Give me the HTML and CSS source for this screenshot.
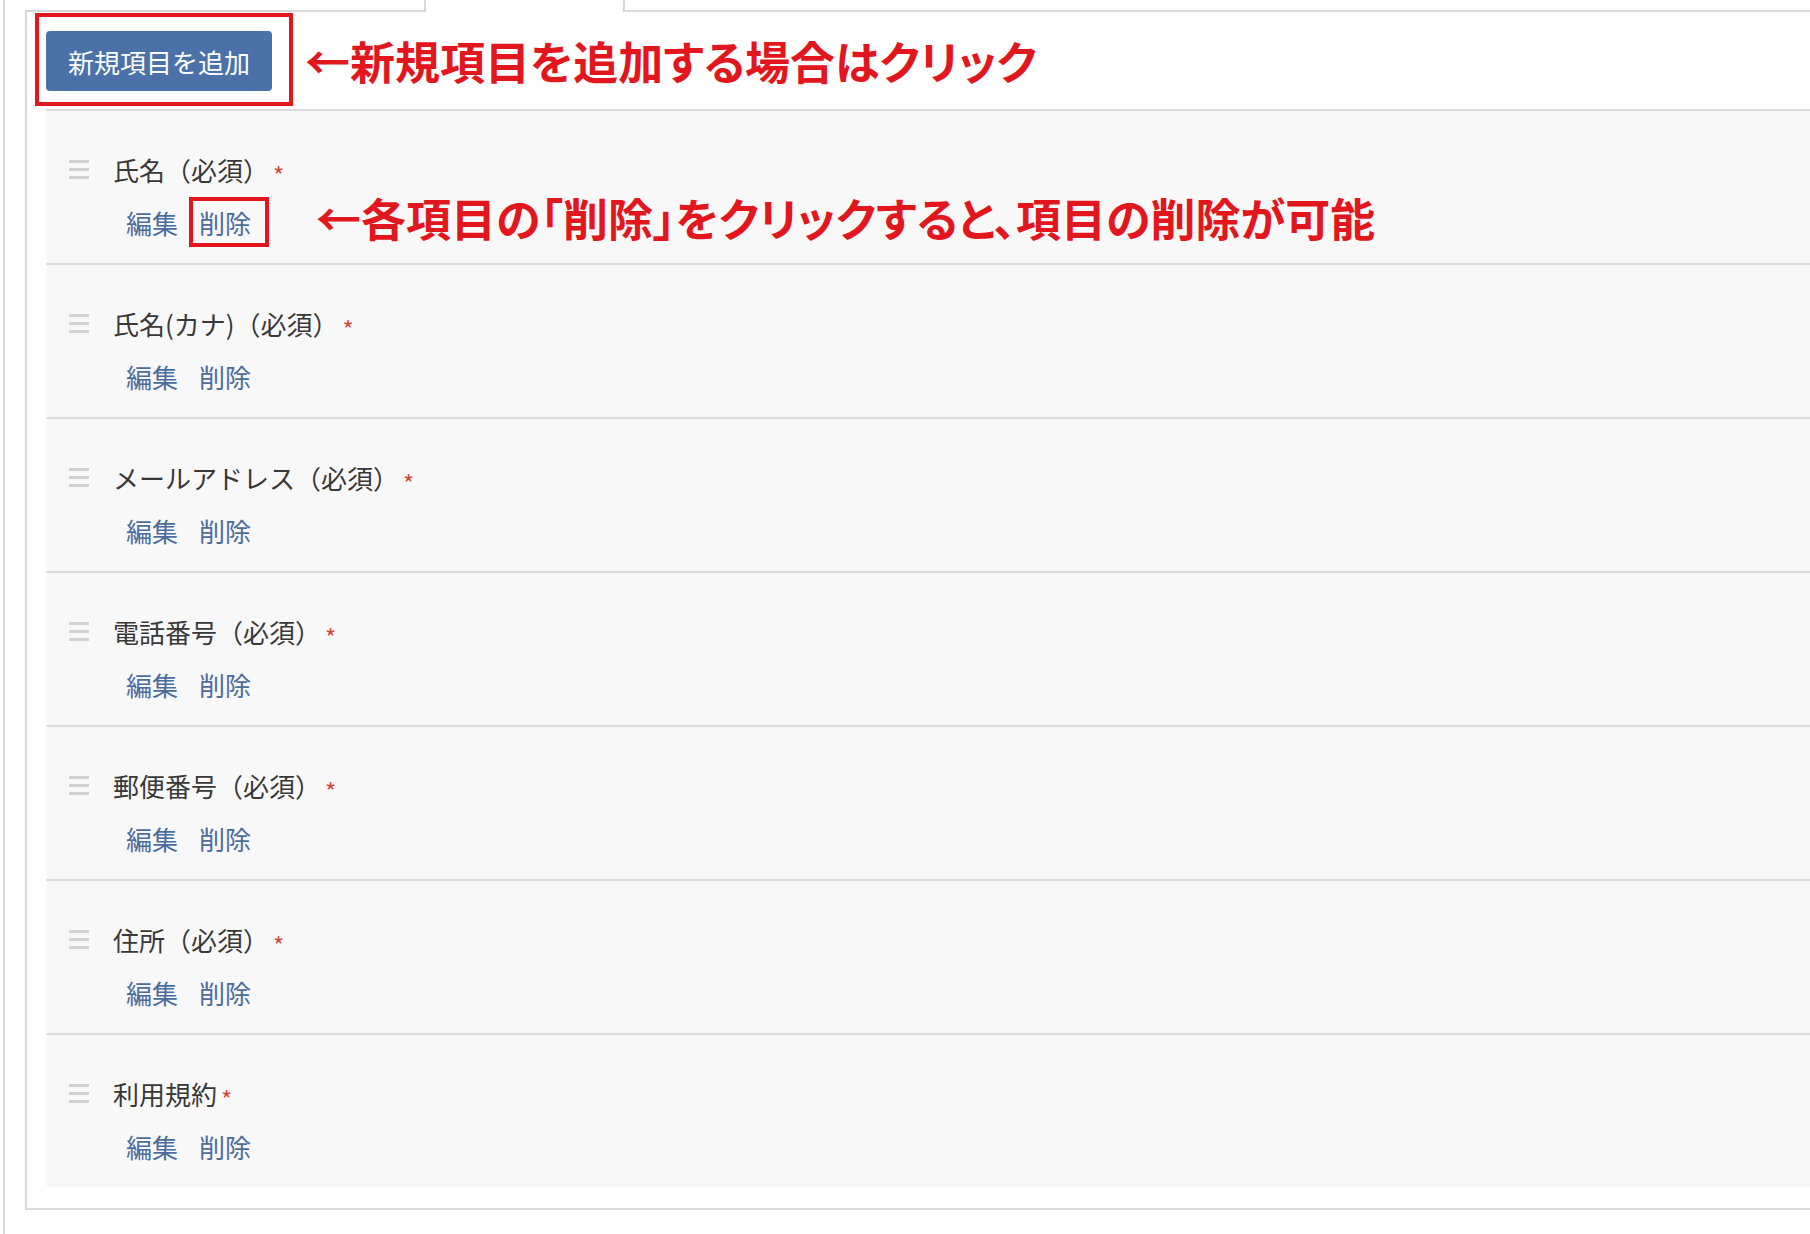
FILE: index.html
```html
<!DOCTYPE html>
<html lang="ja">
<head>
  <meta charset="UTF-8" />
  <meta name="viewport" content="width=device-width, initial-scale=1.0" />
  <title>フォーム項目</title>
  <link rel="stylesheet" href="styles.css">
</head>
<body>
  <div class="frame">
    <div class="tabs">
      <div class="tab"></div>
    </div>
    <div class="panel">
      <div class="panel-head">
        <div class="mark-box">
          <button class="add-button">新規項目を追加</button>
        </div>
        <span class="note">←新規項目を追加する場合はクリック</span>
      </div>

      <ul class="field-list">
        <li class="field">
          <span class="handle"><svg width="20" height="20" viewBox="0 0 20 20"><rect x="0" y="0" width="20" height="3"/><rect x="0" y="8" width="20" height="3"/><rect x="0" y="16" width="20" height="3"/></svg></span>
          <div class="field-label">氏名（必須）<span class="req">*</span></div>
          <div class="field-actions">
            <a class="edit">編集</a>
            <a class="delete marked">削除</a>
            <span class="note note-sub">←各項目の「削除」をクリックすると、項目の削除が可能</span>
          </div>
        </li>
        <li class="field">
          <span class="handle"><svg width="20" height="20" viewBox="0 0 20 20"><rect x="0" y="0" width="20" height="3"/><rect x="0" y="8" width="20" height="3"/><rect x="0" y="16" width="20" height="3"/></svg></span>
          <div class="field-label">氏名(カナ)（必須）<span class="req">*</span></div>
          <div class="field-actions">
            <a class="edit">編集</a>
            <a class="delete">削除</a>
          </div>
        </li>
        <li class="field">
          <span class="handle"><svg width="20" height="20" viewBox="0 0 20 20"><rect x="0" y="0" width="20" height="3"/><rect x="0" y="8" width="20" height="3"/><rect x="0" y="16" width="20" height="3"/></svg></span>
          <div class="field-label">メールアドレス（必須）<span class="req">*</span></div>
          <div class="field-actions">
            <a class="edit">編集</a>
            <a class="delete">削除</a>
          </div>
        </li>
        <li class="field">
          <span class="handle"><svg width="20" height="20" viewBox="0 0 20 20"><rect x="0" y="0" width="20" height="3"/><rect x="0" y="8" width="20" height="3"/><rect x="0" y="16" width="20" height="3"/></svg></span>
          <div class="field-label">電話番号（必須）<span class="req">*</span></div>
          <div class="field-actions">
            <a class="edit">編集</a>
            <a class="delete">削除</a>
          </div>
        </li>
        <li class="field">
          <span class="handle"><svg width="20" height="20" viewBox="0 0 20 20"><rect x="0" y="0" width="20" height="3"/><rect x="0" y="8" width="20" height="3"/><rect x="0" y="16" width="20" height="3"/></svg></span>
          <div class="field-label">郵便番号（必須）<span class="req">*</span></div>
          <div class="field-actions">
            <a class="edit">編集</a>
            <a class="delete">削除</a>
          </div>
        </li>
        <li class="field">
          <span class="handle"><svg width="20" height="20" viewBox="0 0 20 20"><rect x="0" y="0" width="20" height="3"/><rect x="0" y="8" width="20" height="3"/><rect x="0" y="16" width="20" height="3"/></svg></span>
          <div class="field-label">住所（必須）<span class="req">*</span></div>
          <div class="field-actions">
            <a class="edit">編集</a>
            <a class="delete">削除</a>
          </div>
        </li>
        <li class="field">
          <span class="handle"><svg width="20" height="20" viewBox="0 0 20 20"><rect x="0" y="0" width="20" height="3"/><rect x="0" y="8" width="20" height="3"/><rect x="0" y="16" width="20" height="3"/></svg></span>
          <div class="field-label">利用規約<span class="req">*</span></div>
          <div class="field-actions">
            <a class="edit">編集</a>
            <a class="delete">削除</a>
          </div>
        </li>
      </ul>
    </div>
  </div>
</body>
</html>
```

FILE: styles.css
```css
body {
  margin: 0;
  background: #fff;
  font-family: "Noto Sans CJK JP", "Noto Sans", sans-serif;
  color: #333;
  overflow: hidden;
}
.frame {
  margin-left: 3px;
  border-left: 2px solid #d8d8d8;
  padding-left: 20px;
  height: 100vh;
}
/* 上部タブ（選択中） */
.tabs {
  display: flex;
  height: 12px;
  margin-bottom: -2px;
  padding-left: 399px;
}
.tab {
  width: 197px;
  border-left: 2px solid #d8d8d8;
  border-right: 2px solid #d8d8d8;
  background: #fff;
  position: relative;
  z-index: 1;
}
.panel {
  border: 2px solid #d9d9d9;
  margin-right: -40px;
  padding-bottom: 21px;
}
.panel-head {
  display: flex;
  align-items: center;
  padding: 1px 0 3px 8px;
}
/* 赤枠の注釈 */
.mark-box {
  border: 4px solid #e2171e;
  padding: 14px 17px 11px 7px;
}
.add-button {
  width: 226px;
  height: 60px;
  border: none;
  border-radius: 4px;
  background-color: #4a72a9;
  color: #fff;
  font-family: inherit;
  font-size: 26px;
  cursor: pointer;
}
.note {
  color: #e2171e;
  font-weight: bold;
  font-size: 45px;
  line-height: 50px;
  white-space: nowrap;
  font-feature-settings: "palt";
  margin-left: 12px;
  margin-top: 2px;
}
.field-list {
  list-style: none;
  margin: 0 0 0 19px;
  padding: 0;
  background: #f8f8f8;
}
.field {
  display: grid;
  grid-template-columns: 20px 1fr;
  column-gap: 24px;
  row-gap: 17px;
  align-items: center;
  border-top: 2px solid #dcdcdc;
  padding: 41px 0 22px 23px;
}
.handle svg {
  display: block;
  fill: #d2d2d2;
}
.field-label {
  font-size: 26px;
  line-height: 36px;
  height: 36px;
  color: #383838;
  white-space: nowrap;
}
.req {
  color: #d0483a;
  font-size: 24px;
  line-height: 1;
  margin-left: 4px;
  vertical-align: -4px;
}
.field-actions {
  grid-column: 2;
  display: flex;
  align-items: center;
  height: 36px;
  padding-left: 13px;
  gap: 21px;
  font-size: 26px;
  line-height: 36px;
}
.field-actions a {
  color: #4c6d9c;
  cursor: pointer;
}
.marked {
  position: relative;
}
.marked::after {
  content: "";
  position: absolute;
  left: -10px;
  right: -18px;
  top: -8px;
  bottom: -6px;
  border: 4px solid #e2171e;
}
.note-sub {
  margin-left: 44px;
  margin-top: 0;
  margin-bottom: 10px;
}
```
